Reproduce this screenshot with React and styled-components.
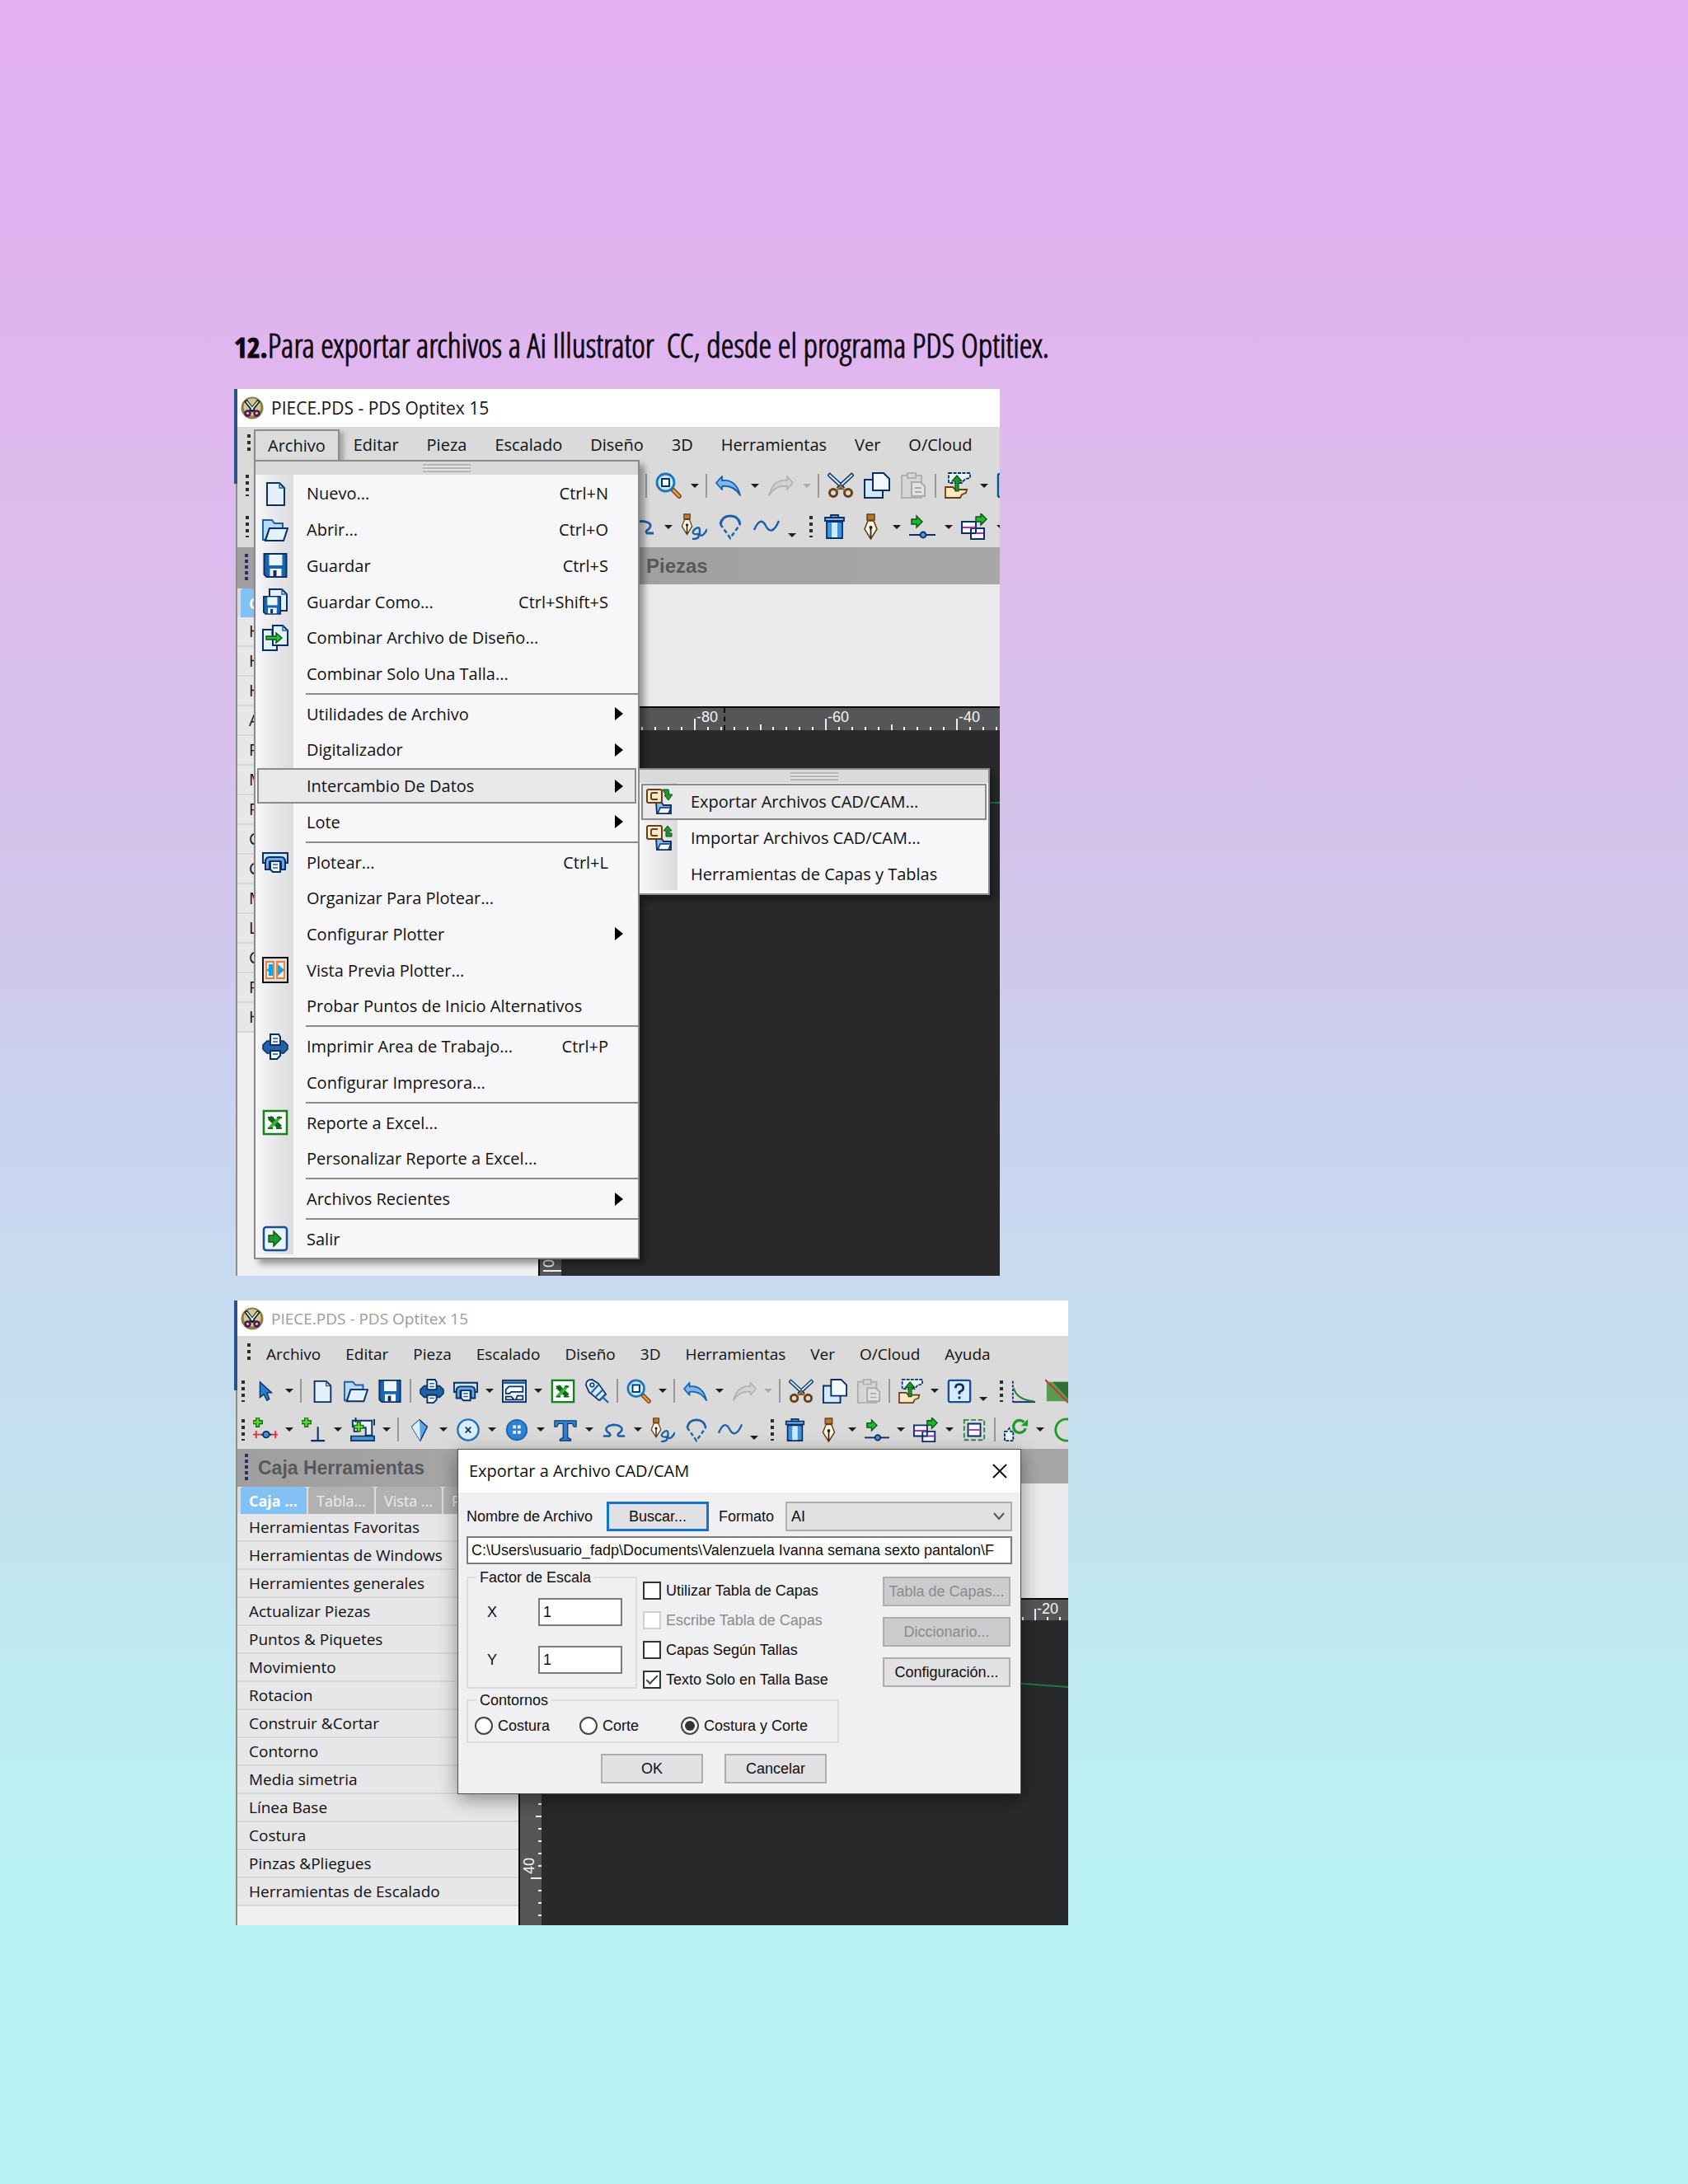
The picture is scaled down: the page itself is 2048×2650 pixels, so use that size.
import React, { useState } from "react";
import styled, { createGlobalStyle, css, ThemeProvider } from "styled-components";

const UI_FONT = '"Open Sans", "Noto Sans", sans-serif';
const CLASSIC_FONT = '"Liberation Sans", Arial, sans-serif';
const NAVY = "#0b2f63";
const BLUE = "#1b5fa8";
const BROWN = "#6b3d12";
const GREEN = "#1e9a2c";

const GlobalStyle = createGlobalStyle`
  *, *::before, *::after { box-sizing: border-box; }
  body {
    margin: 0;
    min-height: 100vh;
    color: #111;
    font-family: ${UI_FONT};
    background: linear-gradient(
      180deg,
      #e3b0f1 0%, #e0b3ef 12%, #debaec 22%, #d7c1ec 34%, #d0c8ed 44%,
      #cad2ef 50%, #c8d9f0 57%, #c4e0ee 66%, #beebf1 77%, #baf1f3 86%, #b8f2f3 100%
    );
  }
  button, input, select { font: inherit; color: inherit; margin: 0; }
`;

/* ---------- icons ---------- */

const Svg = styled.svg.attrs({ viewBox: "0 0 32 32", "aria-hidden": true })`
  display: block;
  flex: none;
  width: ${(p) => p.theme.icon}px;
  height: ${(p) => p.theme.icon}px;
  fill: none;
`;

const Page = ({ x = 0, y = 0, w = 20, h = 26 }) => (
  <g transform={`translate(${x} ${y})`}>
    <path d={`M1 1H${w - 6}L${w} 7V${h}H1Z`} fill="#e4f1fd" stroke={NAVY} strokeWidth="2" />
    <path d={`M${w - 6} 1V7H${w}`} stroke={BLUE} strokeWidth="1.5" />
  </g>
);

const Floppy = ({ s = 1, x = 0, y = 0 }) => (
  <g transform={`translate(${x} ${y}) scale(${s})`}>
    <path d="M1 1H28V29H4L1 26Z" fill="#1a66ae" stroke={NAVY} strokeWidth="2" />
    <rect x="7" y="2" width="16" height="13" fill="#eaf5ff" />
    <rect x="8" y="19" width="14" height="9" fill="#f5faff" />
    <rect x="12" y="21" width="4" height="7" fill={NAVY} />
  </g>
);

const Plus = () => (
  <path d="M4 0h4v4h4v4H8v4H4V8H0V4h4Z" fill="#6bd83c" stroke="#0f6f12" strokeWidth="1.5" />
);

const ArrowRight = ({ x = 0, y = 0 }) => (
  <path
    transform={`translate(${x} ${y})`}
    d="M0 4H6V0L13 7L6 14V10H0Z"
    fill="#22b532"
    stroke="#0a5214"
    strokeWidth="1.4"
  />
);

const Nib = () => (
  <>
    <path d="M12 1h9v7h-9Z" fill="#b97837" stroke={BROWN} strokeWidth="1.5" />
    <path d="M13 9h7l4 10l-7.500 12L9 19Z" fill="#fff6e6" stroke={BROWN} strokeWidth="1.6" />
    <path d="M16.500 17V30" stroke="#222" strokeWidth="1.8" />
    <circle cx="16.500" cy="17" r="2" fill="#222" />
  </>
);

const CadBox = ({ flip }) => (
  <>
    <path d="M12 17h7l2 3h9v10H13Z" fill="#8cbcf0" stroke={NAVY} strokeWidth="1.8" />
    <path d="M17 23h13l-3 7H14Z" fill="#f1f8ff" stroke={NAVY} strokeWidth="1.5" />
    <rect x="1" y="1" width="18" height="16" rx="2" fill="#ffe9cf" stroke={BROWN} strokeWidth="2" />
    <path d="M14 5H8a2 2 0 0 0-2 2v4a2 2 0 0 0 2 2h6" stroke={BROWN} strokeWidth="2" />
    {flip ? (
      <path d="M21 7l5-6l5 6h-3v3h3v4h-7V7Z" fill={GREEN} stroke="#0a5214" />
    ) : (
      <path d="M20 1h7l1 6h4l-5 7l-5-6h2Z" fill={GREEN} stroke="#0a5214" />
    )}
  </>
);

const drawings = {
  cursor: <path d="M9 4V24L14 20L18 28L21 26L18 18H24Z" fill="#2d7dc9" stroke={NAVY} strokeWidth="1.5" />,
  page: <Page x={5} y={2} w={22} h={28} />,
  open: (
    <>
      <path d="M1 4H12L15 8H25V14H9L4 28H1Z" fill="#b7d9f8" stroke={BLUE} strokeWidth="2" />
      <path d="M9 14H31L26 29H4Z" fill="#e3f1fd" stroke={NAVY} strokeWidth="2" />
    </>
  ),
  save: <Floppy x={1.5} y={1} />,
  saveAs: (
    <>
      <Page x={8} y={0} w={22} h={27} />
      <Floppy x={1} y={9} s={0.76} />
    </>
  ),
  merge: (
    <>
      <Page x={0} y={5} w={18} h={26} />
      <Page x={12} y={0} w={19} h={25} />
      <path d="M5 14h12v-4l7 6l-7 6v-4H5Z" fill="#2cc13a" stroke="#0a5214" strokeWidth="1.4" />
    </>
  ),
  plotter: (
    <>
      <path d="M1 5H31V17H28V14H4V17H1Z" fill="#c6e3fb" stroke={NAVY} strokeWidth="2" />
      <path d="M4 25V16Q4 10 9 10H23Q28 10 28 16V25H23V16H9V25Z" fill="#6ba9e2" stroke={NAVY} strokeWidth="2" />
      <path d="M10 15H22V28H13L10 25Z" fill="#f1f8ff" stroke={NAVY} strokeWidth="2" />
      <path d="M13 19h6M13 23h6" stroke={BLUE} strokeWidth="1.6" />
    </>
  ),
  preview: (
    <>
      <rect x="1" y="1" width="30" height="30" fill="#dedede" stroke="#111" strokeWidth="2" />
      <path d="M5 6h9v20H5ZM18 6h9v20H18Z" fill="#f0e9e4" stroke="#e0803c" strokeWidth="1.8" />
      <path d="M13 9v14H8v-5l-3-2l3-2V9ZM19 9l8 7l-8 7Z" fill="#1c9fdf" />
    </>
  ),
  printer: (
    <>
      <path d="M6 9H26L31 14V19L26 24H6L1 19V14Z" fill="#1f62a6" stroke={NAVY} strokeWidth="1.6" />
      <path d="M10 1h10l2 3v10H10Z" fill="#f0f7ff" stroke={NAVY} strokeWidth="2" />
      <path d="M13 6h6M13 10h6" stroke={BLUE} strokeWidth="1.6" />
      <path d="M10 21h12v6l-4 4h-8Z" fill="#f0f7ff" stroke={NAVY} strokeWidth="2" />
      <path d="M13 25h6" stroke={BLUE} strokeWidth="1.6" />
    </>
  ),
  excel: (
    <>
      <rect x="2" y="2" width="28" height="28" fill="#fbfdfb" stroke="#17801d" strokeWidth="2.500" />
      <path d="M9 10l13 12" stroke="#0f6a17" strokeWidth="6" />
      <path d="M22 9L9 23" stroke="#3fae43" strokeWidth="4" />
      <path d="M7 10h7M18 10h6M7 23h6M17 23h7" stroke="#0f6a17" strokeWidth="2" />
    </>
  ),
  exit: (
    <>
      <rect x="2" y="2" width="28" height="28" rx="3" fill="#eaf4ff" stroke="#164f91" strokeWidth="2.500" />
      <path d="M8 12h6V7l9 9l-9 9v-5H8Z" fill={GREEN} stroke="#0a5214" strokeWidth="1.4" />
    </>
  ),
  layout: (
    <>
      <rect x="1" y="2" width="30" height="28" fill="#e8f4ff" stroke={NAVY} strokeWidth="2" />
      <path d="M2 5h28" stroke={BLUE} strokeWidth="3" />
      <path d="M5 18V14L9 10H27V17H12L10 19H5ZM5 27V23H12L16 27ZM18 27L20 22H27V27Z" fill="#fff" stroke={NAVY} strokeWidth="1.8" />
    </>
  ),
  tag: (
    <>
      <path d="M2 8Q2 1 10 1L18 6L28 20L19 28L6 17Z" fill="#d5e9fc" stroke={NAVY} strokeWidth="1.8" />
      <circle cx="10" cy="8" r="2.500" stroke={NAVY} strokeWidth="1.500" />
      <path d="M18 8L9 18M23 15L15 23M27 20L20 28M24 24l7 7" stroke={BLUE} strokeWidth="2.200" />
    </>
  ),
  zoom: (
    <>
      <path d="M20 20L29 29" stroke={BROWN} strokeWidth="5.500" strokeLinecap="round" />
      <path d="M22 22L29 29" stroke="#e59a3c" strokeWidth="3" strokeLinecap="round" />
      <circle cx="12.500" cy="12.500" r="10.500" fill="#c3ecfb" stroke="#2272b8" strokeWidth="2.800" />
      <rect x="8" y="8" width="9" height="9" fill="#f4fbff" stroke={NAVY} strokeWidth="2" />
    </>
  ),
  undo: (
    <path d="M1 13L8 5V10Q25 8 30 28Q22 15 8 17V21Z" fill="#7ab8ee" stroke={BLUE} strokeWidth="1.8" strokeLinejoin="round" />
  ),
  redo: (
    <path d="M31 13L24 5V10Q7 8 2 28Q10 15 24 17V21Z" fill="#d2d2d2" stroke="#b3b3b5" strokeWidth="1.800" strokeLinejoin="round" />
  ),
  cut: (
    <>
      <path d="M1 2L16 16L19 20M31 2L16 16L13 20" stroke={NAVY} strokeWidth="5" />
      <path d="M2 3L15 15M30 3L17 15" stroke="#cde9fb" strokeWidth="2.200" />
      <circle cx="7" cy="25" r="4.500" stroke={BROWN} strokeWidth="3" />
      <circle cx="25" cy="25" r="4.500" stroke={BROWN} strokeWidth="3" />
      <path d="M11 22L16 17L21 22" stroke="#a9713a" strokeWidth="2.500" />
    </>
  ),
  copy: (
    <>
      <path d="M1 9H23V31H1Z" fill="#d3e8fb" stroke={NAVY} strokeWidth="2" />
      <path d="M11 1H24L31 8V22H11Z" fill="#f1f8ff" stroke={NAVY} strokeWidth="2" />
    </>
  ),
  paste: (
    <>
      <path d="M2 4H26V31H2Z" fill="#d6d6d7" stroke="#b0b0b2" strokeWidth="2" />
      <path d="M9 1H19V7H9Z" fill="#d6d6d7" stroke="#b0b0b2" strokeWidth="2" />
      <path d="M14 12H25L30 17V29H14Z" fill="#e2e2e3" stroke="#aaaaac" strokeWidth="2" />
      <path d="M18 19h8M18 24h8" stroke="#aaaaac" strokeWidth="1.8" />
    </>
  ),
  exportPiece: (
    <>
      <path d="M5 1H31V7L25 8L21 13H5Z" fill="#e8f5ff" stroke={NAVY} strokeWidth="1.800" strokeDasharray="4 1.500" />
      <path d="M1 18H10L13 21H27L26 25L21 27L19 31H1Z" fill="#ffe6c4" stroke={BROWN} strokeWidth="1.800" />
      <path d="M15 4L21 11H17V23H13V11H9Z" fill={GREEN} stroke="#0a5214" strokeWidth="1.200" />
    </>
  ),
  help: (
    <>
      <rect x="2" y="2" width="28" height="28" rx="2" fill="#d8ebfd" stroke="#164f91" strokeWidth="2.500" />
      <path d="M11 12Q11 7 16 7Q21 7 21 12Q21 15 16 17V20M16 23V26" stroke={NAVY} strokeWidth="3" />
    </>
  ),
  chart: (
    <>
      <path d="M2 3V30" stroke={NAVY} strokeWidth="2" strokeDasharray="3 2" />
      <path d="M2 30H31" stroke={NAVY} strokeWidth="2" />
      <path d="M3 12Q7 27 29 29" stroke="#2b8446" strokeWidth="2.200" />
    </>
  ),
  square: (
    <>
      <rect x="2" y="4" width="28" height="25" fill="#5a9a50" />
      <path d="M10 4H30V26Z" fill="#2f6f34" />
      <path d="M0 1L30 31" stroke="#c9353a" strokeWidth="2.200" />
    </>
  ),
  node: (
    <>
      <Plus />
      <path d="M0 22H32M4 17V27M29 17V27" stroke="#d4343c" strokeWidth="2" />
      <path d="M11 22H24" stroke={NAVY} strokeWidth="2" />
      <circle cx="17" cy="22" r="4" fill="#4d95d4" stroke={NAVY} strokeWidth="2" />
    </>
  ),
  perp: (
    <>
      <Plus />
      <path d="M12 30H30M21 12V30" stroke={NAVY} strokeWidth="2.200" />
    </>
  ),
  machine: (
    <>
      <path d="M1 24H31V30H1Z" fill="#4d95d4" stroke={NAVY} strokeWidth="1.800" />
      <path d="M3 4H28V23H20V13H10V18H5V12H3Z" fill="#e5f3ff" stroke={NAVY} strokeWidth="2" />
      <path d="M7 0V6M31 2V10" stroke={NAVY} strokeWidth="2" />
      <g transform="translate(5 6)">
        <Plus />
      </g>
    </>
  ),
  kite: (
    <>
      <path d="M16 3L26 12L17 30L6 12Z" fill="#58a5e3" stroke={NAVY} strokeWidth="1.500" />
      <path d="M16 3L17 30L6 12Z" fill="#d9efff" />
    </>
  ),
  circleX: (
    <>
      <circle cx="16" cy="16" r="13.500" fill="#d9eefc" stroke="#2272b8" strokeWidth="2.500" />
      <path d="M12.500 12.500L19.500 19.500M19.500 12.500L12.500 19.500" stroke={NAVY} strokeWidth="1.800" />
    </>
  ),
  button: (
    <>
      <circle cx="16" cy="16" r="13" fill="#2f83d4" stroke="#1c66b4" strokeWidth="2" />
      <path d="M11 10h4v4h-4ZM17 10h4v4h-4ZM11 17h4v4h-4ZM17 17h4v4h-4Z" fill="#eaf6ff" />
    </>
  ),
  type: <path d="M2 4H30V12H27L25 8H19V26L23 28V30H9V28L13 26V8H7L5 12H2Z" fill="#2f7fca" stroke={NAVY} strokeWidth="1.200" />,
  omega: <path d="M2 24H10Q13 22 8 19Q3 14 9 11Q16 8 23 11Q29 14 24 19Q19 22 22 24H30" stroke={BLUE} strokeWidth="2.800" />,
  penCurve: (
    <>
      <g transform="translate(-6 0) scale(.82)">
        <Nib />
      </g>
      <path d="M14 31Q24 31 21 25Q12 26 16 20Q23 14 23 21Q22 29 27 26Q31 22 32 19" stroke={BLUE} strokeWidth="2.400" />
    </>
  ),
  semi: (
    <>
      <path d="M4 13Q6 3 16 3Q26 3 28 13" stroke={BLUE} strokeWidth="3" />
      <path d="M4 13L16 30L28 13" stroke={BLUE} strokeWidth="2.500" strokeDasharray="5 3" />
    </>
  ),
  wave: <path d="M1 20Q8 4 14 13Q22 30 31 9" stroke={BLUE} strokeWidth="2.400" />,
  trash: (
    <>
      <path d="M7 10H26V30H7Z" fill="#3f93dc" stroke={NAVY} strokeWidth="1.800" />
      <path d="M13 11H20V29H13Z" fill="#cfe9fd" />
      <path d="M5 5H28V9H5ZM12 5V2H21V5" fill="#7ab8ee" stroke={NAVY} strokeWidth="1.800" />
    </>
  ),
  pen: <Nib />,
  slider: (
    <>
      <ArrowRight x={3} y={3} />
      <path d="M0 26H32" stroke={NAVY} strokeWidth="2" />
      <circle cx="17" cy="26" r="3.500" fill="#4d95d4" stroke={NAVY} strokeWidth="1.800" />
    </>
  ),
  pieces: (
    <>
      <path d="M1 10H18V24H1ZM12 18H28V31H12Z" fill="#f3f9ff" stroke={NAVY} strokeWidth="2" />
      <path d="M2 17H17M18 24H27" stroke="#a432c8" strokeWidth="2" />
      <ArrowRight x={18} y={0} />
    </>
  ),
  frame: (
    <>
      <path d="M3 3H29V29H3Z" stroke="#2b8446" strokeWidth="2" strokeDasharray="6 3" />
      <path d="M8 8H24V24H8Z" fill="#f3f9ff" stroke={NAVY} strokeWidth="2" />
      <path d="M9 16H23" stroke="#a432c8" strokeWidth="2" />
    </>
  ),
  rotate: (
    <>
      <path d="M1 18H4L7 14L9 18H12V30H1Z" fill="#e8f4ff" stroke={NAVY} strokeWidth="2" strokeDasharray="4 1.500" />
      <path d="M28 14A8 8 0 1 1 26 6" stroke={GREEN} strokeWidth="3.400" />
      <path d="M31 2V11H22Z" fill={GREEN} />
    </>
  ),
  ring: <circle cx="18" cy="16" r="14" stroke={GREEN} strokeWidth="3" />,
  exportCad: <CadBox />,
  importCad: <CadBox flip />,
};

const Icon = ({ name }) => <Svg>{drawings[name]}</Svg>;

const LogoSvg = styled.svg`
  display: block;
  width: 28px;
  height: 28px;
`;

const Logo = () => (
  <LogoSvg viewBox="0 0 28 28" aria-hidden="true">
    <circle cx="14" cy="14" r="13.500" fill="#8f7d48" />
    <circle cx="14" cy="13" r="10.500" fill="#d3c897" />
    <path d="M6 5L16 18M22 5L12 18" stroke="#111" strokeWidth="4.500" />
    <path d="M7 6L15 16M21 6L13 16" stroke="#cfeef5" strokeWidth="2" />
    <circle cx="8.500" cy="20.500" r="3" fill="none" stroke="#4f1262" strokeWidth="2.400" />
    <circle cx="19.500" cy="20.500" r="3" fill="none" stroke="#4f1262" strokeWidth="2.400" />
  </LogoSvg>
);

/* ---------- document page ---------- */

const Sheet = styled.main`
  display: flex;
  flex-direction: column;
  padding: 392px 284px 312px;
`;

const Step = styled.h1`
  margin: 0 0 26px;
  font: 300 40px/54px "Open Sans Condensed Light", "Open Sans Condensed", "Liberation Sans", sans-serif;
  white-space: pre-wrap;
  color: #0d0610;
  -webkit-text-stroke: 1px #0d0610;
  b { font: 700 34px/1 "Open Sans Condensed", "Liberation Sans", sans-serif; }
`;

/* ---------- application window ---------- */

const Frame = styled.section`
  position: relative;
  width: 100%;
  max-width: ${(p) => p.theme.width}px;
  padding-left: 4px;
  font-size: ${(p) => p.theme.font}px;
  background:
    linear-gradient(#2c5189, #2c5189) 0 0 / 4px ${(p) => p.theme.edge}px no-repeat,
    linear-gradient(#8b8c90, #8b8c90) 2px 0 / 2px 100% no-repeat;
  & + & { margin-top: 30px; }
`;

const TitleBar = styled.header`
  display: flex;
  align-items: center;
  gap: 9px;
  height: ${(p) => p.theme.title}px;
  padding-left: 4px;
  background: #fff;
  color: ${(p) => (p.$inactive ? "#9b9b9b" : "#151515")};
  font-size: ${(p) => p.theme.titleFont}px;
`;

const Chrome = styled.div`
  background: #dadadb;
`;

const MenuBar = styled.nav`
  display: flex;
  align-items: flex-start;
  height: ${(p) => p.theme.menubar}px;
  padding: 3px 0 0 10px;
`;

const Grip = styled.span`
  flex: none;
  width: 10px;
  height: ${(p) => (p.$tall ? 34 : 26)}px;
  background: repeating-linear-gradient(
    180deg,
    ${(p) => (p.$tall ? "#2b2b6c" : "#2c2c2c")} 0 4px,
    transparent 4px ${(p) => (p.$tall ? 7 : 8)}px
  ) 2px 0 / 4px 100% no-repeat;
`;

const MenuGrip = styled(Grip)`
  height: 20px;
  margin-top: 6px;
`;

const MenuSlot = styled.div`
  position: relative;
`;

const MenuButton = styled.button`
  display: block;
  height: 37px;
  padding: 0 ${(p) => p.theme.menuPad}px;
  border: 2px solid transparent;
  background: none;
  line-height: 30px;
  white-space: nowrap;
  ${(p) =>
    p.$open &&
    css`
      border-color: #8a8a8d;
      border-bottom: 0;
      background: #dddcdd;
      box-shadow: 5px 3px 5px rgba(0, 0, 0, 0.25);
    `}
`;

const ToolBar = styled.div`
  display: flex;
  align-items: center;
  height: ${(p) => p.theme.toolbar}px;
  padding-left: ${(p) => p.theme.toolStart}px;
  overflow: hidden;
`;

const Tool = styled.button`
  display: grid;
  place-items: center;
  flex: none;
  width: ${(p) => p.theme.cell}px;
  height: 40px;
  padding: 0;
  border: 0;
  background: none;
`;

const Drop = styled.button`
  flex: none;
  display: flex;
  justify-content: ${(p) => (p.$overflow ? "flex-start" : "center")};
  align-items: center;
  width: ${(p) => p.theme.drop + (p.$overflow ? 9 : 0)}px;
  height: ${(p) => (p.$overflow ? 26 : 40)}px;
  padding: ${(p) => (p.$overflow ? "20px 0 0 4px" : "0")};
  border: 0;
  background: none;
  &::before {
    content: "";
    border: 5px solid transparent;
    border-top-color: ${(p) => (p.$dim ? "#aaaaac" : "#1d1d1d")};
    border-bottom: 0;
  }
`;

const Divider = styled.span`
  flex: none;
  width: 10px;
  height: 29px;
  background: linear-gradient(#98989a, #98989a) center / 2px 100% no-repeat;
`;

const Workspace = styled.div`
  display: flex;
  min-height: ${(p) => p.theme.body}px;
`;

const Side = styled.aside`
  flex: none;
  width: ${(p) => p.theme.side}px;
  background: #f0eff1;
`;

const Caption = styled.h2`
  display: flex;
  align-items: center;
  gap: 8px;
  height: ${(p) => p.$height}px;
  margin: 0;
  padding-left: ${(p) => p.$inset}px;
  background: linear-gradient(90deg, #a09fa0, #a8a7a8);
  color: #58585a;
  font: 700 ${(p) => p.theme.caption}px/1 ${CLASSIC_FONT};
  white-space: nowrap;
`;

const Tabs = styled.div`
  display: flex;
  gap: 2px;
  height: ${(p) => p.theme.tabs}px;
  padding-left: 4px;
  overflow: hidden;
  background: #dcdbdc;
`;

const Tab = styled.button`
  flex: none;
  width: 80px;
  padding: 0 0 0 10px;
  border: 0;
  border-radius: 4px 4px 0 0;
  background: ${(p) => (p.$active ? "#83c0f3" : "#b2b1b2")};
  color: ${(p) => (p.$active ? "#fff" : "#ececec")};
  font-size: 18px;
  font-weight: ${(p) => (p.$active ? 700 : 400)};
  text-align: left;
`;

const ToolList = styled.ul`
  margin: 0;
  padding: 0;
  list-style: none;
`;

const ToolGroup = styled.li`
  height: ${(p) => p.theme.row}px;
  padding-left: 14px;
  border-bottom: 2px solid #d7d6d8;
  background: #e7e6e8;
  line-height: ${(p) => p.theme.row - 2}px;
  white-space: nowrap;
`;

const Main = styled.div`
  flex: 1;
  min-width: 0;
  display: flex;
  flex-direction: column;
  overflow: hidden;
`;

const Pieces = styled.div`
  height: ${(p) => p.theme.pieces}px;
  background: #eae9eb;
`;

const RulerRow = styled.div`
  position: relative;
  display: flex;
  flex: none;
  height: ${(p) => p.theme.ruler}px;
  padding-left: ${(p) => p.theme.rulerStart}px;
  overflow: hidden;
  border-top: 2px solid #0c0c0c;
  background: #565658;
`;

const RulerUnit = styled.div`
  position: relative;
  flex: none;
  width: ${(p) => p.theme.unit}px;
  color: #f4f4f4;
  font: 18px/20px ${CLASSIC_FONT};
  padding: 1px 0 0 3px;
  svg { position: absolute; left: 0; bottom: 0; width: 100%; height: 14px; }
`;

const Pointer = styled.span`
  position: absolute;
  top: 0;
  bottom: 0;
  left: 225px;
  border-left: 2px dashed #0c0c0c;
`;

const CanvasRow = styled.div`
  flex: 1;
  display: flex;
`;

const RulerColumn = styled.div`
  display: flex;
  flex-direction: column;
  justify-content: flex-end;
  flex: none;
  width: 28px;
  overflow: hidden;
  padding-bottom: ${(p) => p.theme.columnEnd}px;
  border-left: 2px solid #0c0c0c;
  background: #565658;
`;

const ColumnUnit = styled.div`
  position: relative;
  flex: none;
  display: flex;
  align-items: flex-start;
  height: ${(p) => p.$height}px;
  color: #f4f4f4;
  font: 18px/18px ${CLASSIC_FONT};
  padding: ${(p) => p.$lead}px 0 0 2px;
  svg { position: absolute; right: 0; top: 0; width: 26px; height: 100%; }
  span { writing-mode: vertical-rl; transform: rotate(180deg); }
`;

const Canvas = styled.div`
  flex: 1;
  display: flex;
  justify-content: flex-end;
  background: #29292b;
`;

const SeamSvg = styled.svg`
  width: 80px;
  height: 100px;
  fill: none;
  stroke: #1f7a43;
  stroke-width: 2;
`;

const Ticks = ({ unit }) => (
  <svg viewBox={`0 0 ${unit} 14`} preserveAspectRatio="none" aria-hidden="true">
    {Array.from({ length: 10 }, (_, i) => {
      const x = Math.round((i * unit) / 10) + 1;
      const h = i === 0 ? 14 : i === 5 ? 7 : 4;
      return <path key={i} d={`M${x} 14V${14 - h}`} stroke="#eee" strokeWidth="2" />;
    })}
  </svg>
);

const ColumnTicks = ({ height }) => (
  <svg viewBox={`0 0 26 ${height}`} aria-hidden="true">
    {Array.from({ length: Math.floor(height / 15) + 1 }, (_, i) => {
      const w = i === 5 ? 7 : i === 0 ? 13 : 4;
      return <path key={i} d={`M26 ${i * 15 + 1}H${26 - w}`} stroke="#eee" strokeWidth="2" />;
    })}
  </svg>
);

const MAIN_TOOLS =
  "cursor v | page open save | printer plotter v layout v excel tag | zoom v | undo v redo d | cut copy paste | exportPiece v help o : chart square".split(" ");
const EDIT_TOOLS =
  "node v perp v machine v | kite v circleX v button v type v omega v penCurve semi wave o : trash pen v slider v pieces v frame | rotate v ring".split(" ");

const ToolRow = ({ label, tools }) => (
  <ToolBar role="toolbar" aria-label={label}>
    <Grip />
    {tools.map((t, i) => {
      if (t === "v" || t === "d") return <Drop key={i} $dim={t === "d"} aria-label="Opciones" />;
      if (t === "o") return <Drop key={i} $overflow aria-label="Opciones" />;
      if (t === "|") return <Divider key={i} />;
      if (t === ":") return <Grip key={i} />;
      return (
        <Tool key={i} aria-label={t}>
          <Icon name={t} />
        </Tool>
      );
    })}
  </ToolBar>
);

const MENUS = ["Archivo", "Editar", "Pieza", "Escalado", "Diseño", "3D", "Herramientas", "Ver", "O/Cloud", "Ayuda"];

const TABS = ["Caja ...", "Tabla...", "Vista ...", "P"];

const GROUPS = [
  "Herramientas Favoritas", "Herramientas de Windows", "Herramientes generales", "Actualizar Piezas",
  "Puntos & Piquetes", "Movimiento", "Rotacion", "Construir &Cortar", "Contorno", "Media simetria",
  "Línea Base", "Costura", "Pinzas &Pliegues", "Herramientas de Escalado",
];

/* ---------- drop-down menus ---------- */

const Popup = styled.div`
  position: absolute;
  z-index: ${(p) => (p.$sub ? 3 : 2)};
  left: 100%;
  top: 0;
  width: 427px;
  border: 2px solid #8a8a8d;
  background: #f7f6f8;
  box-shadow: 6px 6px 7px rgba(0, 0, 0, 0.35);
  ${(p) =>
    !p.$sub &&
    css`
      left: 0;
      top: 100%;
      width: 468px;
    `}
`;

const Handle = styled.div`
  height: 16px;
  background:
    repeating-linear-gradient(180deg, #b4b4b6 0 2px, #e4e4e5 2px 4px) center / 58px 10px no-repeat,
    #dadadb;
`;

const Items = styled.ul`
  display: flex;
  flex-direction: column;
  height: ${(p) => (p.$sub ? 134 : 950)}px;
  margin: 0;
  padding: 1px 0;
  list-style: none;
  background: linear-gradient(90deg, #f6f5f7, #dbdadc) 0 0 / 46px calc(100% - 4px) no-repeat;
`;

const Item = styled.li`
  position: relative;
  flex: 1;
  display: flex;
`;

const Rule = styled.li`
  height: 5px;
  margin-left: 61px;
  background: linear-gradient(#8a8a8d, #8a8a8d) center / 100% 2px no-repeat;
`;

const ItemButton = styled.button`
  flex: 1;
  display: grid;
  grid-template-columns: 40px 1fr auto 32px;
  align-items: center;
  margin: 0 2px;
  padding: 0;
  border: 2px solid ${(p) => (p.$active ? "#8a8a8d" : "transparent")};
  background: ${(p) => (p.$active ? "#e9e8ea" : "none")};
  text-align: left;
  white-space: nowrap;
`;

const IconSlot = styled.span`
  display: grid;
  justify-content: center;
`;

const ItemLabel = styled.span`
  padding-left: 18px;
`;

const Caret = styled.span`
  margin-left: 8px;
  width: 10px;
  border: 8px solid transparent;
  border-left: 10px solid #000;
  border-right: 0;
`;

const FILE_MENU = [
  { label: "Nuevo...", keys: "Ctrl+N", icon: "page" },
  { label: "Abrir...", keys: "Ctrl+O", icon: "open" },
  { label: "Guardar", keys: "Ctrl+S", icon: "save" },
  { label: "Guardar Como...", keys: "Ctrl+Shift+S", icon: "saveAs" },
  { label: "Combinar Archivo de Diseño...", icon: "merge" },
  { label: "Combinar Solo Una Talla..." },
  null,
  { label: "Utilidades de Archivo", more: true },
  { label: "Digitalizador", more: true },
  {
    label: "Intercambio De Datos",
    more: true,
    items: [
      { label: "Exportar Archivos CAD/CAM...", icon: "exportCad", active: true },
      { label: "Importar Archivos CAD/CAM...", icon: "importCad" },
      { label: "Herramientas de Capas y Tablas" },
    ],
  },
  { label: "Lote", more: true },
  null,
  { label: "Plotear...", keys: "Ctrl+L", icon: "plotter" },
  { label: "Organizar Para Plotear..." },
  { label: "Configurar Plotter", more: true },
  { label: "Vista Previa Plotter...", icon: "preview" },
  { label: "Probar Puntos de Inicio Alternativos" },
  null,
  { label: "Imprimir Area de Trabajo...", keys: "Ctrl+P", icon: "printer" },
  { label: "Configurar Impresora..." },
  null,
  { label: "Reporte a Excel...", icon: "excel" },
  { label: "Personalizar Reporte a Excel..." },
  null,
  { label: "Archivos Recientes", more: true },
  null,
  { label: "Salir", icon: "exit" },
];

const Menu = ({ items, sub }) => (
  <Popup $sub={sub}>
    <Handle />
    <Items $sub={sub} role="menu">
      {items.map((it, i) =>
        it === null ? (
          <Rule key={i} role="separator" />
        ) : (
          <Item key={i} role="none">
            <ItemButton role="menuitem" $active={it.active || Boolean(it.items)}>
              <IconSlot>{it.icon && <Icon name={it.icon} />}</IconSlot>
              <ItemLabel>{it.label}</ItemLabel>
              <span>{it.keys}</span>
              {it.more && <Caret />}
            </ItemButton>
            {it.items && <Menu items={it.items} sub />}
          </Item>
        )
      )}
    </Items>
  </Popup>
);

/* ---------- export dialog ---------- */

const Dialog = styled.form`
  position: absolute;
  z-index: 2;
  left: 271px;
  top: 180px;
  width: 684px;
  border: 1px solid #4d4d50;
  background: #f0eff1;
  box-shadow: 0 6px 22px rgba(0, 0, 0, 0.4);
  color: #101010;
  font: 18px/22px ${CLASSIC_FONT};
`;

const DialogTitle = styled.div`
  display: flex;
  align-items: center;
  justify-content: space-between;
  height: 52px;
  padding: 0 16px 0 13px;
  background: #fff;
  font: 20px/26px ${UI_FONT};
`;

const Close = styled.button`
  width: 18px;
  height: 18px;
  padding: 0;
  border: 0;
  background: none;
  svg { display: block; stroke: #111; stroke-width: 2; }
`;

const DialogBody = styled.div`
  padding: 10px 10px 12px;
`;

const FileRow = styled.div`
  display: grid;
  grid-template-columns: 170px 124px 93px 1fr;
  align-items: center;
  height: 37px;
  & > label:nth-of-type(2) { padding-left: 12px; }
`;

const Push = styled.button`
  height: 36px;
  padding: 0;
  border: ${(p) => (p.$focus ? "3px solid #1174cf" : "2px solid #adacae")};
  background: ${(p) => (p.disabled ? "#cccbcd" : "#e2e1e3")};
  color: ${(p) => (p.disabled ? "#8b8a8c" : "inherit")};
`;

const SelectBox = styled.div`
  position: relative;
  svg { position: absolute; right: 8px; top: 13px; fill: none; stroke: #555; stroke-width: 2; pointer-events: none; }
`;

const Select = styled.select`
  appearance: none;
  display: block;
  width: 100%;
  height: 36px;
  padding: 0 30px 0 5px;
  border: 2px solid #adacae;
  border-radius: 0;
  background: #e2e1e3;
`;

const TextBox = styled.input`
  display: block;
  width: 100%;
  height: 34px;
  padding: 0 4px;
  border: 2px solid #7b7a7d;
  background: #fff;
`;

const PathRow = styled.div`
  padding-top: 6px;
`;

const Options = styled.div`
  display: grid;
  grid-template-columns: 207px 1fr 155px;
  gap: 7px;
  padding: 5px 2px 0 0;
`;

const Group = styled.fieldset`
  min-width: 0;
  margin: 0;
  padding: 0;
  border: 2px solid #dddcde;
  legend { margin-left: 10px; padding: 0 4px; }
`;

const ScaleRow = styled.div`
  display: grid;
  grid-template-columns: 85px 102px;
  align-items: center;
  padding: 14px 0 10px 0;
  label { padding-left: 23px; }
`;

const Checks = styled.div`
  display: flex;
  flex-direction: column;
  gap: 14px;
  padding-top: 16px;
`;

const Choice = styled.label`
  display: flex;
  align-items: center;
  gap: 6px;
  height: 22px;
  color: ${(p) => (p.$disabled ? "#8b8a8c" : "inherit")};
`;

const Check = styled.input.attrs({ type: "checkbox" })`
  appearance: none;
  display: grid;
  place-items: center;
  width: 22px;
  height: 22px;
  border: 2px solid #333;
  background: #fff;
  &:disabled { border-color: #cfced0; }
  &:checked::before {
    content: "";
    width: 14px;
    height: 7px;
    border: solid #444;
    border-width: 0 0 2px 2px;
    transform: translateY(-2px) rotate(-45deg);
  }
`;

const Radio = styled.input.attrs({ type: "radio" })`
  appearance: none;
  display: grid;
  place-items: center;
  width: 22px;
  height: 22px;
  border: 2px solid #444;
  border-radius: 50%;
  background: #fff;
  &:checked::before {
    content: "";
    width: 12px;
    height: 12px;
    border-radius: 50%;
    background: #333;
  }
`;

const Pushes = styled.div`
  display: flex;
  flex-direction: column;
  gap: 13px;
  padding-top: 10px;
`;

const Contours = styled(Group)`
  width: 452px;
  margin-top: 3px;
`;

const Radios = styled.div`
  display: grid;
  grid-template-columns: 127px 123px 1fr;
  padding: 9px 0 8px 8px;
`;

const Footer = styled.div`
  display: grid;
  grid-template-columns: 124px 124px;
  gap: 26px;
  justify-content: start;
  padding: 13px 0 0 163px;
`;

const FILE_PATH = "C:\\Users\\usuario_fadp\\Documents\\Valenzuela Ivanna semana sexto pantalon\\F";

const ExportDialog = () => {
  const [contour, setContour] = useState("Costura y Corte");
  return (
    <Dialog role="dialog" aria-labelledby="export-title" onSubmit={(e) => e.preventDefault()}>
      <DialogTitle>
        <span id="export-title">Exportar a Archivo CAD/CAM</span>
        <Close type="button" aria-label="Cerrar">
          <svg width="18" height="18" viewBox="0 0 18 18">
            <path d="M1 1L17 17M17 1L1 17" />
          </svg>
        </Close>
      </DialogTitle>
      <DialogBody>
        <FileRow>
          <label htmlFor="file-path">Nombre de Archivo</label>
          <Push type="button" $focus>Buscar...</Push>
          <label htmlFor="file-format">Formato</label>
          <SelectBox>
            <Select id="file-format" defaultValue="AI">
              <option>AI</option>
            </Select>
            <svg width="16" height="10" viewBox="0 0 16 10">
              <path d="M2 1L8 8L14 1" />
            </svg>
          </SelectBox>
        </FileRow>
        <PathRow>
          <TextBox id="file-path" defaultValue={FILE_PATH} />
        </PathRow>
        <Options>
          <Group>
            <legend>Factor de Escala</legend>
            <ScaleRow>
              <label htmlFor="scale-x">X</label>
              <TextBox id="scale-x" defaultValue="1" />
            </ScaleRow>
            <ScaleRow>
              <label htmlFor="scale-y">Y</label>
              <TextBox id="scale-y" defaultValue="1" />
            </ScaleRow>
          </Group>
          <Checks>
            <Choice><Check />Utilizar Tabla de Capas</Choice>
            <Choice $disabled><Check disabled />Escribe Tabla de Capas</Choice>
            <Choice><Check />Capas Según Tallas</Choice>
            <Choice><Check defaultChecked />Texto Solo en Talla Base</Choice>
          </Checks>
          <Pushes>
            <Push type="button" disabled>Tabla de Capas...</Push>
            <Push type="button" disabled>Diccionario...</Push>
            <Push type="button">Configuración...</Push>
          </Pushes>
        </Options>
        <Contours>
          <legend>Contornos</legend>
          <Radios>
            {["Costura", "Corte", "Costura y Corte"].map((name) => (
              <Choice key={name}>
                <Radio name="contour" checked={contour === name} onChange={() => setContour(name)} />
                {name}
              </Choice>
            ))}
          </Radios>
        </Contours>
        <Footer>
          <Push type="submit">OK</Push>
          <Push type="button">Cancelar</Push>
        </Footer>
      </DialogBody>
    </Dialog>
  );
};

/* ---------- windows ---------- */

const menuWindow = {
  width: 929, edge: 115, font: 20, titleFont: 21, icon: 32, title: 46, menubar: 46, toolbar: 50, toolStart: 8,
  cell: 44, drop: 19, menuPad: 15, body: 884, side: 365, caption: 24, tabs: 35, row: 36,
  pieces: 148, ruler: 29, rulerStart: 30, unit: 159, columnEnd: 4,
};

const dialogWindow = {
  width: 1012, edge: 109, font: 19, titleFont: 19, icon: 30, title: 43, menubar: 43, toolbar: 47, toolStart: 3,
  cell: 41, drop: 18, menuPad: 13, body: 578, side: 341, caption: 23, tabs: 33, row: 34,
  pieces: 139, ruler: 27, rulerStart: 26, unit: 150, columnEnd: 0,
};

const AppWindow = ({ theme, menus, openMenu, inactive, captionHeights, sideTitle, tabs, groups, caption, seam, units, pointer, column, children }) => (
  <ThemeProvider theme={theme}>
    <Frame>
      <TitleBar $inactive={inactive}>
        <Logo />
        <span>PIECE.PDS - PDS Optitex 15</span>
      </TitleBar>
      <Chrome>
        <MenuBar aria-label="Menú principal">
          <MenuGrip />
          {menus.map((m) => (
            <MenuSlot key={m}>
              <MenuButton $open={m === openMenu}>{m}</MenuButton>
              {m === openMenu && <Menu items={FILE_MENU} />}
            </MenuSlot>
          ))}
        </MenuBar>
        <ToolRow label="Estándar" tools={MAIN_TOOLS} />
        <ToolRow label="Edición" tools={EDIT_TOOLS} />
      </Chrome>
      <Workspace>
        <Side>
          <Caption $height={captionHeights[0]} $inset={7}>
            <Grip $tall />
            {sideTitle}
          </Caption>
          <Tabs>
            {tabs.map((t, i) => (
              <Tab key={t} $active={i === 0}>{t}</Tab>
            ))}
          </Tabs>
          <ToolList>
            {groups.map((g, i) => (
              <ToolGroup key={i}>{g}</ToolGroup>
            ))}
          </ToolList>
        </Side>
        <Main>
          <Caption $height={captionHeights[1]} $inset={131}>{caption}</Caption>
          <Pieces />
          <RulerRow>
            {units.map((u, i) => (
              <RulerUnit key={i}>
                {u}
                <Ticks unit={theme.unit} />
              </RulerUnit>
            ))}
            {pointer && <Pointer />}
          </RulerRow>
          <CanvasRow>
            <RulerColumn>{column}</RulerColumn>
            <Canvas>
              <SeamSvg viewBox="0 0 80 100" aria-hidden="true">
                <path d={seam} />
              </SeamSvg>
            </Canvas>
          </CanvasRow>
        </Main>
      </Workspace>
      {children}
    </Frame>
  </ThemeProvider>
);

export default function App() {
  return (
    <>
      <GlobalStyle />
      <Sheet>
        <Step><b>12.</b>Para exportar archivos a Ai Illustrator  CC, desde el programa PDS Optitiex.</Step>
        <AppWindow
          theme={menuWindow}
          menus={MENUS.slice(0, 9)}
          openMenu="Archivo"
          captionHeights={[50, 45]}
          tabs={["C"]}
          groups={GROUPS.map((g) => g[0])}
          caption="Piezas"
          units={["", "-80", "-60", "-40"]}
          pointer
          seam="M0 88H80"
          column={
            <ColumnUnit $height={24} $lead={8}>
              <span>0</span>
              <svg viewBox="0 0 26 24" aria-hidden="true">
                <path d="M26 22H4" stroke="#eee" strokeWidth="2" />
              </svg>
            </ColumnUnit>
          }
        />
        <AppWindow
          theme={dialogWindow}
          menus={MENUS}
          inactive
          captionHeights={[46, 42]}
          sideTitle="Caja Herramientas"
          tabs={TABS}
          groups={GROUPS}
          units={["", "", "", "", "-20"]}
          seam="M0 75L40 78L80 81"
          column={
            <>
              <ColumnUnit $height={150} $lead={126}>
                <span>40</span>
                <ColumnTicks height={150} />
              </ColumnUnit>
              <ColumnUnit $height={58} $lead={0}>
                <ColumnTicks height={58} />
              </ColumnUnit>
            </>
          }
        >
          <ExportDialog />
        </AppWindow>
      </Sheet>
    </>
  );
}
